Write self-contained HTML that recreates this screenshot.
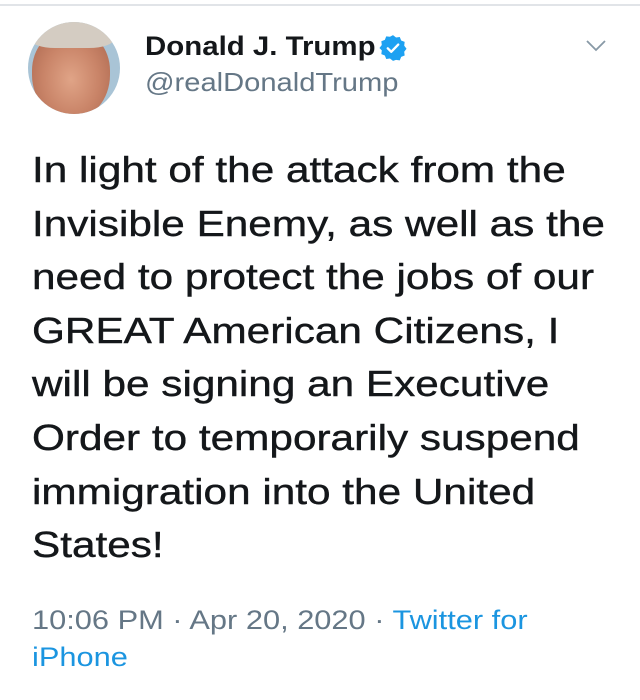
<!DOCTYPE html>
<html><head><meta charset="utf-8"><style>
html,body{margin:0;padding:0;background:#fff;width:640px;height:700px;overflow:hidden;font-family:"Liberation Sans",sans-serif;}
.topline{position:absolute;left:0;top:4px;width:640px;height:2px;background:#e1e4e8;}
.av{position:absolute;left:28px;top:22px;width:92px;height:92px;border-radius:50%;overflow:hidden;background:#a9c4d6;}
.face{position:absolute;left:4px;top:8px;width:78px;height:90px;border-radius:45% 45% 50% 50%;background:radial-gradient(ellipse at 50% 55%,#e0a487 0%,#c98468 50%,#a8644c 100%);}
.hair{position:absolute;left:2px;top:-4px;width:84px;height:30px;border-radius:50% 50% 30% 30%;background:#d4ccc2;}
.s{display:inline-block;transform-origin:0 0;white-space:nowrap;}
.name{position:absolute;left:145px;top:31px;font-size:27px;font-weight:bold;color:#14171a;}
.name .s{transform:scaleX(1.09);}
.badge{position:absolute;left:379px;top:34px;}
.handle{position:absolute;left:145px;top:67px;font-size:26px;color:#657786;}
.handle .s{transform:scaleX(1.12);}
.body{position:absolute;left:32px;top:143px;font-size:36px;line-height:53.6px;color:#14171a;-webkit-text-stroke:0.4px #14171a;}
.body .s{transform:scaleX(1.175);}
.foot{position:absolute;left:32px;top:602px;font-size:27px;line-height:37px;color:#657786;}
.foot .s{transform:scaleX(1.14);}
.blue{color:#1b95e0;}
</style></head><body>
<div class="topline"></div>
<div class="av"><div class="face"></div><div class="hair"></div></div>
<div class="name"><span class="s">Donald J. Trump</span></div>
<svg class="badge" width="28" height="28" viewBox="0 0 24 24"><path d="M12 1l2.6 2 3.2-.4 1.2 3 3 1.2-.4 3.2 2 2.6-2 2.6.4 3.2-3 1.2-1.2 3-3.2-.4L12 23l-2.6-2-3.2.4-1.2-3-3-1.2.4-3.2L0.4 12l2-2.6-.4-3.2 3-1.2 1.2-3 3.2.4z" fill="#1da1f2"/><path d="M7.5 12.3l3 3 6-6.2" stroke="#fff" stroke-width="2" fill="none" stroke-linecap="round" stroke-linejoin="round"/></svg>
<div class="handle"><span class="s">@realDonaldTrump</span></div>
<svg style="position:absolute;left:586px;top:40px" width="20" height="12" viewBox="0 0 20 12"><path d="M1 1l9 9 9-9" stroke="#8899a6" stroke-width="1.8" fill="none"/></svg>
<div class="body"><span class="s">In light of the attack from the<br>Invisible Enemy, as well as the<br>need to protect the jobs of our<br>GREAT American Citizens, I<br>will be signing an Executive<br>Order to temporarily suspend<br>immigration into the United<br>States!</span></div>
<div class="foot"><span class="s">10:06 PM · Apr 20, 2020 · <span class="blue">Twitter for</span><br><span class="blue">iPhone</span></span></div>
</body></html>
